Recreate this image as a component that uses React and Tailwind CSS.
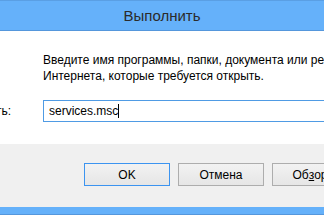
export default function App() {
  const font = { fontFamily: '"Liberation Sans", Arial, sans-serif' };
  return (
    <div className="w-[324px] h-[215px] overflow-hidden flex flex-col bg-white text-[12px] text-black" style={font}>
      <div className="h-[31px] shrink-0 bg-[#65b1fa] border-t border-t-[#5a9fe4] border-b border-b-[#5597dc] flex items-center justify-center">
        <span className="text-[15px] text-[#2b2b2b] leading-none">Выполнить</span>
      </div>
      <div className="h-[113px] shrink-0 bg-white flex flex-col pt-[21px]">
        <div className="pl-[43px] leading-[16px] whitespace-nowrap">
          <div>Введите имя программы, папки, документа или ресурса</div>
          <div>Интернета, которые требуется открыть.</div>
        </div>
        <div className="mt-[16px] flex items-center">
          <div className="w-[43px] shrink-0 flex justify-end pr-[32px] whitespace-nowrap">
            <span>Открыть:</span>
          </div>
          <div className="h-[22px] flex-1 border border-[#4f9be4] border-r-0 flex items-center pl-[5px]">
            <span>services.msc</span>
            <span className="w-px h-[14px] bg-black" />
          </div>
        </div>
      </div>
      <div className="h-[63px] shrink-0 bg-[#f0f0f0] flex items-start pt-[19px] pl-[84px] gap-[8px]">
        <button className="w-[86px] h-[23px] shrink-0 border border-[#3c94f0] bg-gradient-to-b from-[#f2f2f2] to-[#e6e6e6] flex items-center justify-center">OK</button>
        <button className="w-[86px] h-[23px] shrink-0 border border-[#adadad] bg-gradient-to-b from-[#f2f2f2] to-[#e6e6e6] flex items-center justify-center">Отмена</button>
        <button className="w-[86px] h-[23px] shrink-0 border border-[#adadad] bg-gradient-to-b from-[#f2f2f2] to-[#e6e6e6] flex items-center justify-center whitespace-nowrap">Об<span className="underline">з</span>ор...</button>
      </div>
      <div className="h-[8px] shrink-0 bg-[#65b1fa] border-b border-b-[#5597dc]" />
    </div>
  );
}
